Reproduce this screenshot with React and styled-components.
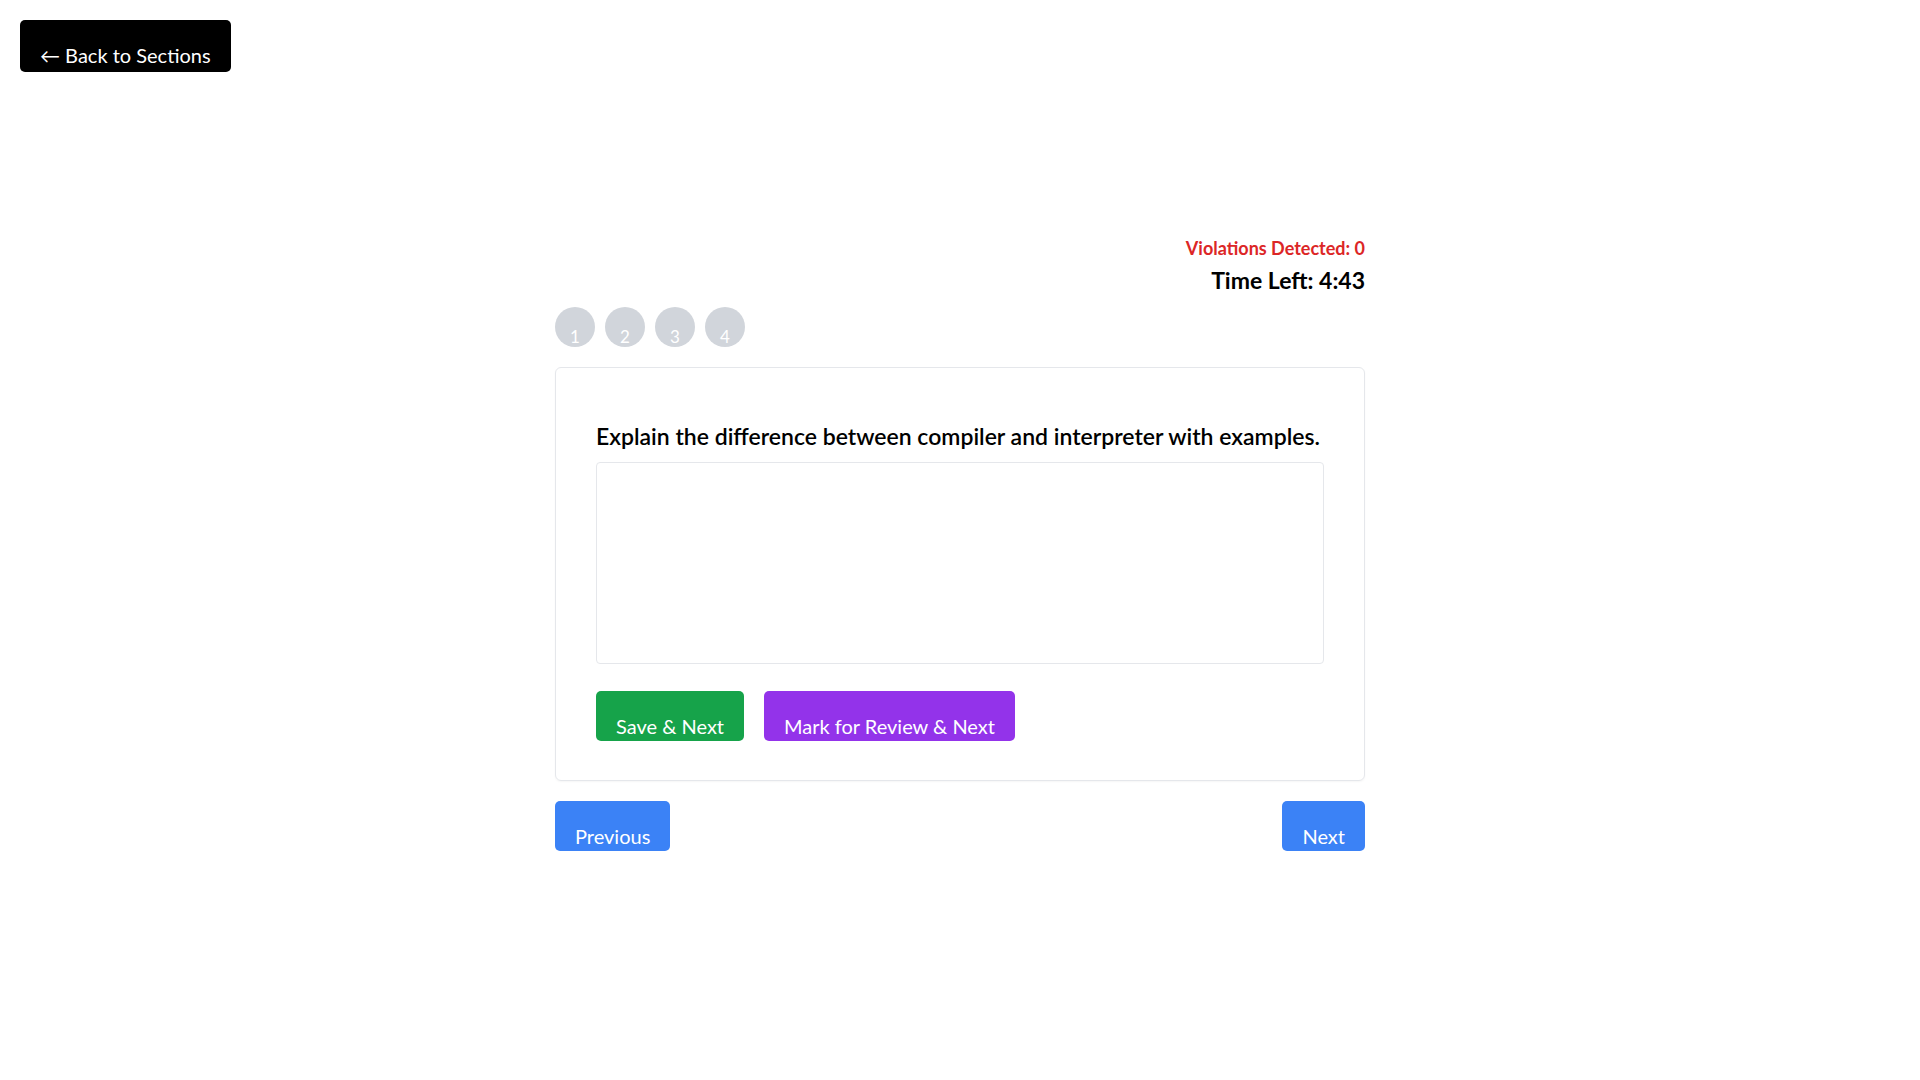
import React, { useState } from "react";
import styled, { createGlobalStyle } from "styled-components";

const GlobalStyle = createGlobalStyle`
  body {
    margin: 0;
    background: #ffffff;
    font-family: "Segoe UI", Lato, "Noto Sans", sans-serif;
    color: #000000;
  }
`;

const TopBar = styled.div`
  padding: 20px;
`;

const BaseButton = styled.button`
  display: inline-flex;
  align-items: flex-end;
  justify-content: center;
  height: ${({ tall }) => (tall ? "52px" : "50px")};
  padding: 0 20px ${({ tall }) => (tall ? "7px" : "5px")};
  box-sizing: border-box;
  border: none;
  border-radius: 5px;
  font-family: inherit;
  font-size: 20px;
  line-height: 20px;
  color: #ffffff;
  background-color: ${({ color }) => color};
  cursor: pointer;
`;

const Main = styled.div`
  width: 810px;
  margin: 144px auto 0;
`;

const StatusBlock = styled.div`
  display: flex;
  flex-direction: column;
  align-items: flex-end;
  margin-bottom: 11px;
`;

const Violations = styled.div`
  color: #dc2626;
  font-size: 18px;
  line-height: 24px;
  font-weight: 700;
`;

const Timer = styled.div`
  margin-top: 4px;
  font-size: 23px;
  line-height: 32px;
  font-weight: 700;
`;

const Palette = styled.div`
  display: flex;
  gap: 10px;
  margin-bottom: 20px;
`;

const Dot = styled.button`
  width: 40px;
  height: 40px;
  border: none;
  border-radius: 50%;
  background: #d1d5db;
  color: #ffffff;
  font-family: inherit;
  font-size: 17px;
  line-height: 16px;
  display: flex;
  align-items: flex-end;
  justify-content: center;
  padding: 0 0 2px;
  box-sizing: border-box;
`;

const Card = styled.div`
  border: 1px solid #e5e7eb;
  border-radius: 6px;
  padding: 40px 40px 39px;
  box-shadow: 0 1px 2px rgba(0, 0, 0, 0.04);
`;

const Question = styled.h2`
  margin: 12px 0 10px;
  font-size: 23px;
  line-height: 32px;
  font-weight: 600;
`;

const Answer = styled.textarea`
  display: block;
  width: 100%;
  height: 202px;
  box-sizing: border-box;
  border: 1px solid #e5e7eb;
  border-radius: 4px;
  padding: 10px;
  font-family: inherit;
  font-size: 16px;
  resize: none;
  outline: none;
`;

const ActionRow = styled.div`
  display: flex;
  gap: 20px;
  margin-top: 27px;
`;

const NavRow = styled.div`
  display: flex;
  justify-content: space-between;
  margin-top: 20px;
`;

const App = () => {
  const [answer, setAnswer] = useState("");

  return (
    <>
      <GlobalStyle />
      <TopBar>
        <BaseButton tall color="#000000">← Back to Sections</BaseButton>
      </TopBar>
      <Main>
        <StatusBlock>
          <Violations>Violations Detected: 0</Violations>
          <Timer>Time Left: 4:43</Timer>
        </StatusBlock>
        <Palette>
          {[1, 2, 3, 4].map((n) => (
            <Dot key={n}>{n}</Dot>
          ))}
        </Palette>
        <Card>
          <Question>
            Explain the difference between compiler and interpreter with examples.
          </Question>
          <Answer value={answer} onChange={(e) => setAnswer(e.target.value)} />
          <ActionRow>
            <BaseButton color="#16a34a">Save &amp; Next</BaseButton>
            <BaseButton color="#9333ea">Mark for Review &amp; Next</BaseButton>
          </ActionRow>
        </Card>
        <NavRow>
          <BaseButton color="#3b82f6">Previous</BaseButton>
          <BaseButton color="#3b82f6">Next</BaseButton>
        </NavRow>
      </Main>
    </>
  );
};

export default App;
